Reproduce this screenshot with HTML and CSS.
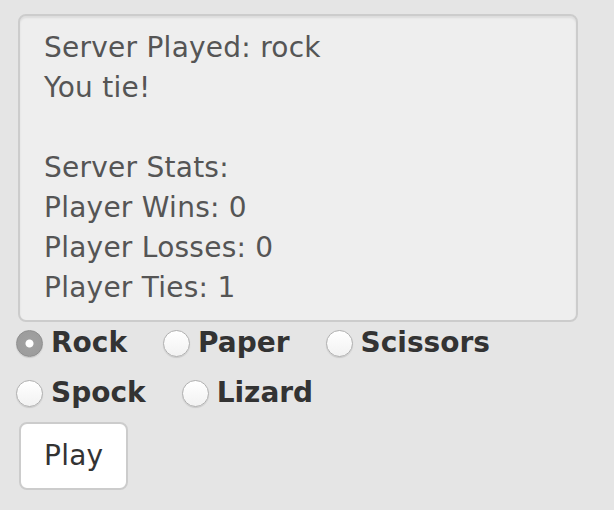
FILE: index.html
```html
<!DOCTYPE html>
<html>
<head>
<meta charset="utf-8">
<link rel="stylesheet" href="styles.css">
</head>
<body>
<div class="game">
  <div class="output">Server Played: rock
You tie!

Server Stats:
Player Wins: 0
Player Losses: 0
Player Ties: 1</div>
  <div class="choices">
    <label class="choice"><input type="radio" name="move" value="rock" checked><span>Rock</span></label>
    <label class="choice"><input type="radio" name="move" value="paper"><span>Paper</span></label>
    <label class="choice"><input type="radio" name="move" value="scissors"><span>Scissors</span></label>
  </div>
  <div class="choices">
    <label class="choice"><input type="radio" name="move" value="spock"><span>Spock</span></label>
    <label class="choice"><input type="radio" name="move" value="lizard"><span>Lizard</span></label>
  </div>
  <button class="play" type="button">Play</button>
</div>
</body>
</html>
```
FILE: styles.css
```css
html, body {
  margin: 0;
  padding: 0;
  background: #e5e5e5;
}
body {
  font-family: "DejaVu Sans", Verdana, sans-serif;
  font-size: 28px;
  line-height: 40px;
  color: #333;
}
.game {
  padding: 14px 0 0 18px;
  display: flex;
  flex-direction: column;
  align-items: flex-start;
}
.output {
  box-sizing: border-box;
  width: 560px;
  padding: 12px 24px;
  border: 2px solid #ccc;
  border-radius: 8px;
  background: #eee;
  color: #555;
  letter-spacing: 0.25px;
  white-space: pre-wrap;
  box-shadow: inset 0 2px 2px rgba(0,0,0,0.075);
}
.choices {
  display: flex;
  gap: 36px;
  margin-left: -2px;
  height: 40px;
  margin-bottom: 10px;
}
.choice {
  display: flex;
  align-items: center;
  gap: 8px;
  font-weight: bold;
  padding-top: 1px;
}
.choice input {
  appearance: none;
  -webkit-appearance: none;
  margin: 2px 0 0 0;
  width: 27px;
  height: 27px;
  box-sizing: border-box;
  border-radius: 50%;
  border: 1px solid #b0b0b0;
  background: linear-gradient(#ffffff, #f2f2f2);
  box-shadow: 0 1px 1px rgba(0,0,0,0.12);
}
.choice input:checked {
  border-color: #8e8e8e;
  background: radial-gradient(circle, #ffffff 0 3.5px, #a0a0a0 4.5px, #9a9a9a 100%);
}
.play {
  font-family: "DejaVu Sans", Verdana, sans-serif;
  font-size: 28px;
  line-height: 40px;
  letter-spacing: 0.25px;
  color: #333;
  background: #fff;
  border: 2px solid #ccc;
  border-radius: 8px;
  padding: 12px 23px;
  margin-left: 1px;
}
```
